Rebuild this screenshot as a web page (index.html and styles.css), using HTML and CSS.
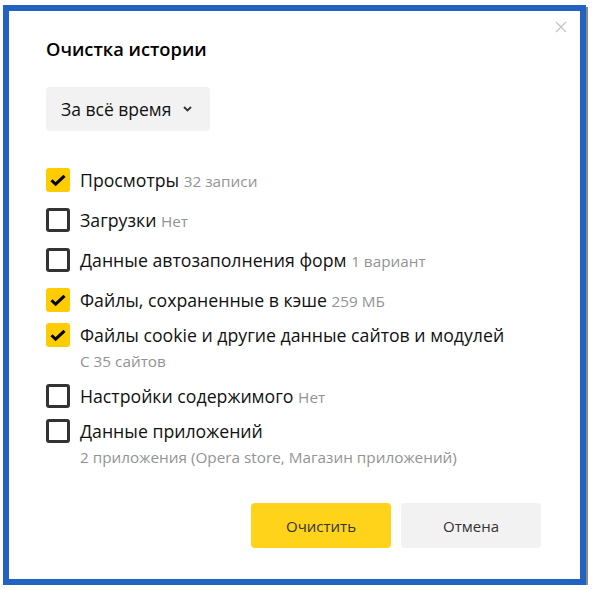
FILE: index.html
```html
<!DOCTYPE html>
<html lang="ru">
<head>
  <meta charset="UTF-8">
  <title>Очистка истории</title>
  <link rel="stylesheet" href="styles.css">
</head>
<body>
  <div class="frame">
    <div class="dialog">
      <button class="close" aria-label="Закрыть">
        <svg width="12" height="12" viewBox="0 0 12 12"><path d="M1 1L11 11M11 1L1 11" stroke="#c4c4c4" stroke-width="1.3" fill="none"/></svg>
      </button>

      <h1 class="title">Очистка истории</h1>

      <div class="period">
        <span>За всё время</span>
        <svg class="chevron" width="9" height="6" viewBox="0 0 9 6"><path d="M1 1L4.5 4.5L8 1" stroke="#333" stroke-width="1.8" fill="none"/></svg>
      </div>

      <!-- Список того, что можно удалить -->
      <div class="items">
        <label class="item">
          <span class="box checked"><svg width="24" height="24" viewBox="0 0 24 24"><path d="M5.5 12.2L9.6 16.2L18.5 7.8" stroke="#000" stroke-width="3" fill="none"/></svg></span>
          <span class="text">Просмотры <span class="note">32 записи</span></span>
        </label>
        <label class="item">
          <span class="box"></span>
          <span class="text">Загрузки <span class="note">Нет</span></span>
        </label>
        <label class="item">
          <span class="box"></span>
          <span class="text">Данные автозаполнения форм <span class="note">1 вариант</span></span>
        </label>
        <label class="item">
          <span class="box checked"><svg width="24" height="24" viewBox="0 0 24 24"><path d="M5.5 12.2L9.6 16.2L18.5 7.8" stroke="#000" stroke-width="3" fill="none"/></svg></span>
          <span class="text">Файлы, сохраненные в кэше <span class="note">259 МБ</span></span>
        </label>
        <div class="item tight">
          <span class="box checked"><svg width="24" height="24" viewBox="0 0 24 24"><path d="M5.5 12.2L9.6 16.2L18.5 7.8" stroke="#000" stroke-width="3" fill="none"/></svg></span>
          <div>
            <div class="text">Файлы cookie и другие данные сайтов и модулей</div>
            <div class="sub">С 35 сайтов</div>
          </div>
        </div>
        <label class="item tight after-sub">
          <span class="box"></span>
          <span class="text">Настройки содержимого <span class="note">Нет</span></span>
        </label>
        <div class="item tight">
          <span class="box"></span>
          <div>
            <div class="text">Данные приложений</div>
            <div class="sub">2 приложения (Opera store, Магазин приложений)</div>
          </div>
        </div>
      </div>

      <div class="actions">
        <button class="btn primary">Очистить</button>
        <button class="btn">Отмена</button>
      </div>
    </div>
  </div>
</body>
</html>
```

FILE: styles.css
```css
* {
  box-sizing: border-box;
}
body {
  margin: 0;
  background: #fff;
  font-family: 'Open Sans', 'Noto Sans', sans-serif;
  color: #111;
}
.frame {
  width: 583px;
  height: 580px;
  margin: 5px 0 0 3px;
  border: 6px solid #2262c0;
  box-shadow: 2px 2px 0 #8a8a8a;
  background: #fff;
}
.dialog {
  position: relative;
  height: 100%;
  padding: 25px 39px 0 37px;
  display: flex;
  flex-direction: column;
}
.close {
  position: absolute;
  top: 6px;
  right: 9px;
  width: 20px;
  height: 20px;
  padding: 0;
  border: none;
  background: none;
  display: flex;
  align-items: center;
  justify-content: center;
}
.title {
  margin: 0;
  font-size: 18.3px;
  font-weight: 600;
  line-height: 26px;
  color: #000;
}
.period {
  margin-top: 25px;
  width: 164px;
  height: 44px;
  background: #f2f2f2;
  border-radius: 4px;
  display: flex;
  align-items: center;
  padding-left: 15px;
  font-size: 17.5px;
  color: #111;
}
.chevron {
  margin-left: auto;
  margin-right: 18px;
}
.items {
  margin-top: 37px;
}
.item {
  display: flex;
  align-items: flex-start;
  margin-top: 15px;
}
.item:first-child {
  margin-top: 0;
}
.item.tight {
  margin-top: 10px;
}
.item.after-sub {
  margin-top: 12px;
}
.box {
  flex: none;
  width: 24px;
  height: 24px;
  border: 3px solid #333;
  border-radius: 3px;
  margin-right: 10px;
}
.box.checked {
  border: none;
  background: #fc0;
}
.text {
  font-size: 17.7px;
  line-height: 24px;
  color: #111;
  white-space: nowrap;
}
.note {
  font-size: 15.3px;
  color: #939393;
}
.sub {
  margin-top: 3px;
  font-size: 15.3px;
  line-height: 22px;
  color: #939393;
}
.actions {
  margin-top: auto;
  margin-bottom: 31px;
  display: flex;
  justify-content: flex-end;
  gap: 10px;
}
.btn {
  width: 140px;
  height: 45px;
  border: none;
  border-radius: 4px;
  background: #f2f2f2;
  font-family: inherit;
  font-size: 15px;
  color: #333;
}
.btn.primary {
  background: #ffd31a;
}
```
